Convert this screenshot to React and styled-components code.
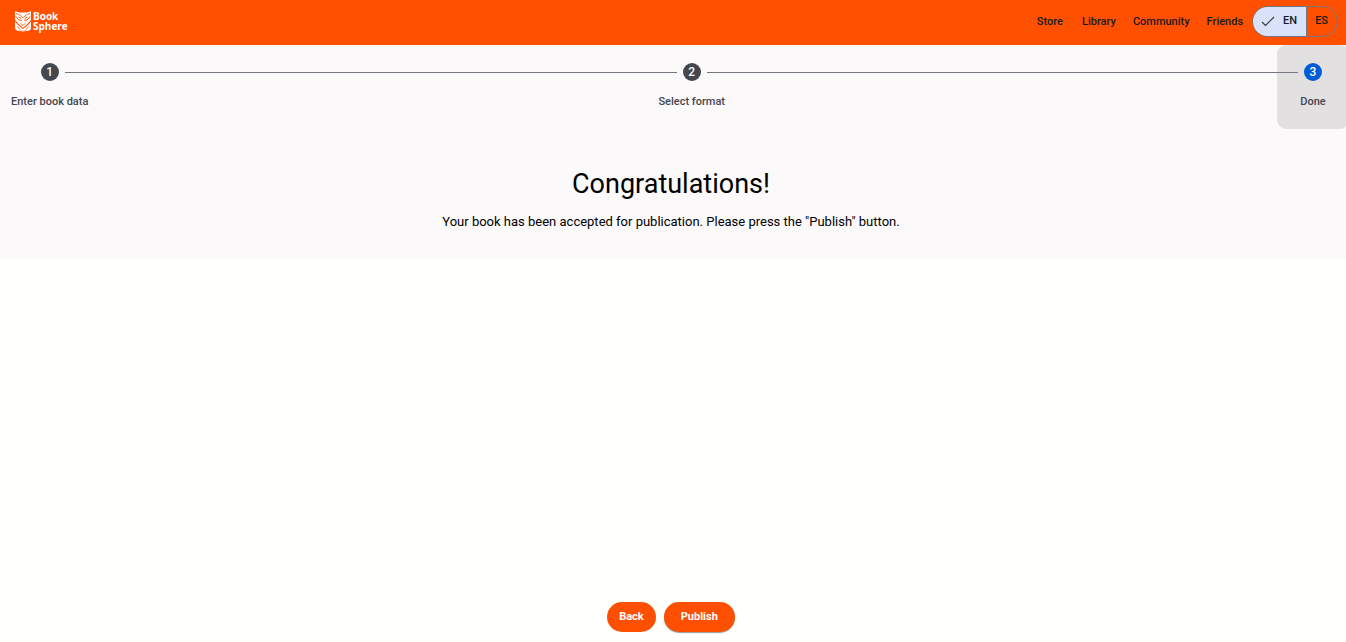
import React, { useState } from "react";
import styled, { createGlobalStyle, css } from "styled-components";

const GlobalStyle = createGlobalStyle`
  *, *::before, *::after { box-sizing: border-box; }
  body {
    margin: 0;
    background: #fffffb;
    color: #000;
    font-family: Roboto, "Liberation Sans", sans-serif;
    font-size: 12px;
  }
  button { font-family: inherit; cursor: pointer; }
`;

const Page = styled.div`
  display: flex;
  flex-direction: column;
  min-height: 100vh;
  overflow: hidden;
`;

const Header = styled.header`
  display: flex;
  align-items: center;
  justify-content: space-between;
  height: 45px;
  padding: 0 8px 2px 14px;
  background: #ff4f00;
`;

const Brand = styled.a`
  display: flex;
  align-items: center;
  gap: 1px;
  color: #fff;
  text-decoration: none;
`;

const BrandName = styled.span`
  display: flex;
  flex-direction: column;
  padding-bottom: 2px;
  font: 700 10px/10px "Open Sans", "Noto Sans", sans-serif;
`;

const Nav = styled.nav`
  display: flex;
  align-items: center;
`;

const NavLink = styled.a`
  padding: 0 9px 0 8px;
  color: #1b1b1f;
  font-size: 11px;
  font-weight: 500;
  line-height: 16px;
  text-decoration: none;

  &:first-child { padding-right: 11px; }
`;

const LanguageToggle = styled.div`
  display: flex;
  height: 31px;
  border: 1px solid #74777f;
  border-radius: 16px;
  overflow: hidden;
`;

const LanguageButton = styled.button`
  display: flex;
  align-items: center;
  gap: 8px;
  padding: 0 9px 2px 8px;
  border: 0;
  background: transparent;
  color: #1b1b1f;
  font-size: 11px;
  font-weight: 500;

  & + & { border-left: 1px solid #74777f; }

  ${({ $selected }) => $selected && css`
    background: #dae2f9;
    color: #131c2b;
  `}
`;

const Panel = styled.main`
  background: #fbf9fa;
`;

const Stepper = styled.ol`
  display: flex;
  margin: 0 -3px 0 -7px;
  padding: 0;
  list-style: none;
`;

const Step = styled.li`
  flex: none;
  display: flex;
  flex-direction: column;
  gap: 13px;
  min-width: 72px;
  height: 84px;
  padding-top: 18px;
  border-radius: 9px;
  background: ${({ $active }) => ($active ? "#e2e0e1" : "transparent")};
`;

const StepTrack = styled.div`
  display: flex;
  align-items: center;
  gap: 6px;
`;

const Line = styled.span`
  flex: 1;
  height: 1px;
  background: ${({ $hidden }) => ($hidden ? "transparent" : "#74777f")};
`;

const Connector = styled.li`
  flex: 1;
  height: 1px;
  margin-top: 27px;
  background: #74777f;
`;

const StepNumber = styled.span`
  width: 18px;
  height: 18px;
  border-radius: 50%;
  background: ${({ $active }) => ($active ? "#005cd6" : "#44474e")};
  color: #fff;
  font-size: 12px;
  font-weight: 500;
  line-height: 18px;
  text-align: center;
`;

const StepLabel = styled.span`
  padding: 0 18px;
  color: #44474e;
  font-size: 11px;
  font-weight: 500;
  line-height: 16px;
  text-align: center;
  white-space: nowrap;
`;

const Message = styled.section`
  padding: 37px 4px 27px 0;
  text-align: center;
`;

const Title = styled.h1`
  margin: 0 0 11px;
  font-size: 27px;
  font-weight: 400;
  line-height: 36px;
`;

const Text = styled.p`
  margin: 0;
  font-size: 13px;
  line-height: 18px;
`;

const Actions = styled.footer`
  display: flex;
  justify-content: center;
  gap: 8px;
  margin-top: auto;
  padding: 0 4px 10px 0;
`;

const ActionButton = styled.button`
  height: 30px;
  padding: 0 ${({ $raised }) => ($raised ? 17 : 12)}px 1px;
  border: 0;
  border-radius: 15px;
  background: #ff4f00;
  color: #fff;
  font-size: 11px;
  font-weight: 700;
  box-shadow: ${({ $raised }) => ($raised ? "0 1px 1px rgba(0, 0, 0, 0.4)" : "none")};
`;

const OwlLogo = () => (
  <svg width="18" height="24" viewBox="0 0 18 24" aria-hidden="true">
    <path d="M1 1.2 5.5 2.6H12.5L17 1.2V17.5Q17 20.4 14 20.8L9 21.6 4 20.8Q1 20.4 1 17.5Z" fill="#fff" />
    <g fill="none" stroke="#ff4f00">
      <path d="M2 3.4Q6.5 4.4 9 7.8Q11.5 4.4 16 3.4" strokeWidth="0.8" />
      <path d="M1.5 6.4Q3 7 3.2 8.4Q4.5 10.8 7.8 10.2M16.5 6.4Q15 7 14.8 8.4Q13.500 10.8 10.2 10.2" strokeWidth="1" />
      <path d="M4.600 7.200 7.4 8.4M13.4 7.200 10.6 8.4" strokeWidth="0.9" />
      <path d="M1 10.6Q3.500 14.4 9 18.400Q14.500 14.4 17 10.6" strokeWidth="1.1" />
      <path d="M6.400 13.2 9 15.400 11.600 13.2" strokeWidth="0.8" />
      <path d="M3.4 16.2 7.600 21.4M14.600 16.2 10.4 21.4" strokeWidth="0.7" />
    </g>
  </svg>
);

const Check = () => (
  <svg width="14" height="12" viewBox="0 0 14 12" fill="none" aria-hidden="true">
    <path d="M1 7 4.5 10.5 13 2" stroke="#30394a" strokeWidth="1.1" />
  </svg>
);

const links = ["Store", "Library", "Community", "Friends"];
const languages = ["EN", "ES"];
const steps = ["Enter book data", "Select format", "Done"];

export default function App() {
  const [language, setLanguage] = useState("EN");
  const last = steps.length - 1;

  return (
    <Page>
      <GlobalStyle />
      <Header>
        <Brand href="#">
          <OwlLogo />
          <BrandName>
            <span>Book</span>
            <span>Sphere</span>
          </BrandName>
        </Brand>
        <Nav>
          {links.map((link) => (
            <NavLink key={link} href="#">{link}</NavLink>
          ))}
          <LanguageToggle role="group" aria-label="Language">
            {languages.map((code) => (
              <LanguageButton
                key={code}
                type="button"
                $selected={code === language}
                aria-pressed={code === language}
                onClick={() => setLanguage(code)}
              >
                {code === language && <Check />}
                {code}
              </LanguageButton>
            ))}
          </LanguageToggle>
        </Nav>
      </Header>
      <Panel>
        <Stepper>
          {steps.map((label, i) => (
            <React.Fragment key={label}>
              {i > 0 && <Connector aria-hidden="true" />}
              <Step $active={i === last} aria-current={i === last ? "step" : undefined}>
                <StepTrack>
                  <Line $hidden={i === 0} />
                  <StepNumber $active={i === last}>{i + 1}</StepNumber>
                  <Line $hidden={i === last} />
                </StepTrack>
                <StepLabel>{label}</StepLabel>
              </Step>
            </React.Fragment>
          ))}
        </Stepper>
        <Message>
          <Title>Congratulations!</Title>
          <Text>Your book has been accepted for publication. Please press the "Publish" button.</Text>
        </Message>
      </Panel>
      <Actions>
        <ActionButton type="button">Back</ActionButton>
        <ActionButton type="button" $raised>Publish</ActionButton>
      </Actions>
    </Page>
  );
}
